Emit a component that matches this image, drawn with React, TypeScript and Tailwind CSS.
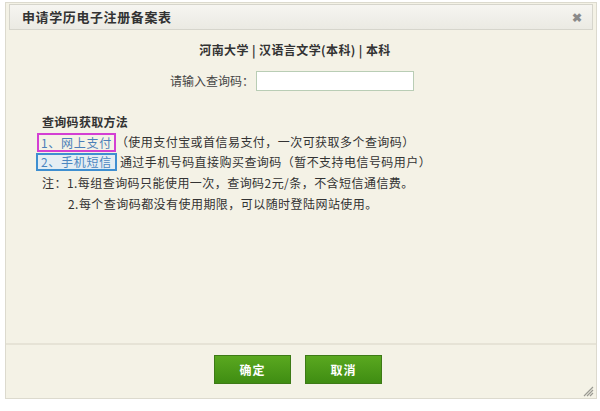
export default function App() {
  return (
    <div className="w-[600px] h-[411px] bg-white font-['Noto_Sans_CJK_SC',sans-serif] text-[#333]">
      <div className="relative ml-[5px] pt-[2px] w-[592px]">
        <div className="h-[397px] border border-[#dcdace] bg-[#f4f2e6] flex flex-col px-[3px] pt-[1px]">
          {/* title bar */}
          <div className="h-[26px] flex items-center justify-between border border-[#d6d5cc] bg-gradient-to-b from-[#f6f5f1] to-[#ebeae3] pl-[12px] pr-[10px]">
            <span className="text-[13px] font-bold tracking-[0.6px] text-[#333]">申请学历电子注册备案表</span>
            <span className="text-[12px] font-bold text-[#8a8a8a]">✖</span>
          </div>

          {/* body */}
          <div className="flex-1 flex flex-col">
            <div className="mt-[10px] h-[20px] leading-[20px] text-center pr-[12px] text-[12px] font-bold tracking-[0.4px] text-[#333]">
              河南大学 | 汉语言文学(本科) | 本科
            </div>
            <div className="mt-[11px] flex items-center justify-center pr-[18px] text-[12px] text-[#444]">
              <span>请输入查询码：</span>
              <div className="ml-[2px] w-[158px] h-[20px] border border-[#b9cdb5] bg-white" />
            </div>

            <div className="mt-[20px] pl-[33px] text-[12px] tracking-[0.45px] text-[#333]">
              <div className="h-[21px] leading-[21px] font-bold tracking-[0.3px]">查询码获取方法</div>
              <div className="h-[20px] flex items-center -ml-[5px]">
                <span className="h-[19px] leading-[15px] border-2 border-[#d43fd3] px-[2px] tracking-[0.7px] text-[#4c7fb8]">1、网上支付</span>
                <span>（使用支付宝或首信易支付，一次可获取多个查询码）</span>
              </div>
              <div className="h-[20px] flex items-center -ml-[6px]">
                <span className="h-[18px] leading-[14px] border-2 border-[#3f8fd0] bg-[#e4edf3] px-[3px] tracking-[0.7px] text-[#4c86c0]">2、手机短信</span>
                <span className="ml-[3px]">通过手机号码直接购买查询码（暂不支持电信号码用户）</span>
              </div>
              <div className="h-[21px] leading-[22px]">注：1.每组查询码只能使用一次，查询码2元/条，不含短信通信费。</div>
              <div className="h-[21px] leading-[21px] pl-[26px]">2.每个查询码都没有使用期限，可以随时登陆网站使用。</div>
            </div>
          </div>

          {/* footer */}
          <div className="-mx-[3px] h-[55px] border-t-2 border-[#e6e3d6] flex justify-center gap-[14px] pt-[10px] pr-[6px]">
            <button className="w-[77px] h-[29px] border border-[#3d7a16] bg-gradient-to-b from-[#5aa820] to-[#3f8d12] text-white text-[12px] font-bold tracking-[1px]">确定</button>
            <button className="w-[77px] h-[29px] border border-[#3d7a16] bg-gradient-to-b from-[#5aa820] to-[#3f8d12] text-white text-[12px] font-bold tracking-[1px]">取消</button>
          </div>
        </div>
        <svg className="absolute right-[3px] bottom-[2px]" width="12" height="12" viewBox="0 0 12 12">
          <path d="M11 2 L2 11 M11 5 L5 11 M11 8 L8 11" stroke="#9a9a92" strokeWidth="1.2" />
        </svg>
      </div>
    </div>
  );
}
